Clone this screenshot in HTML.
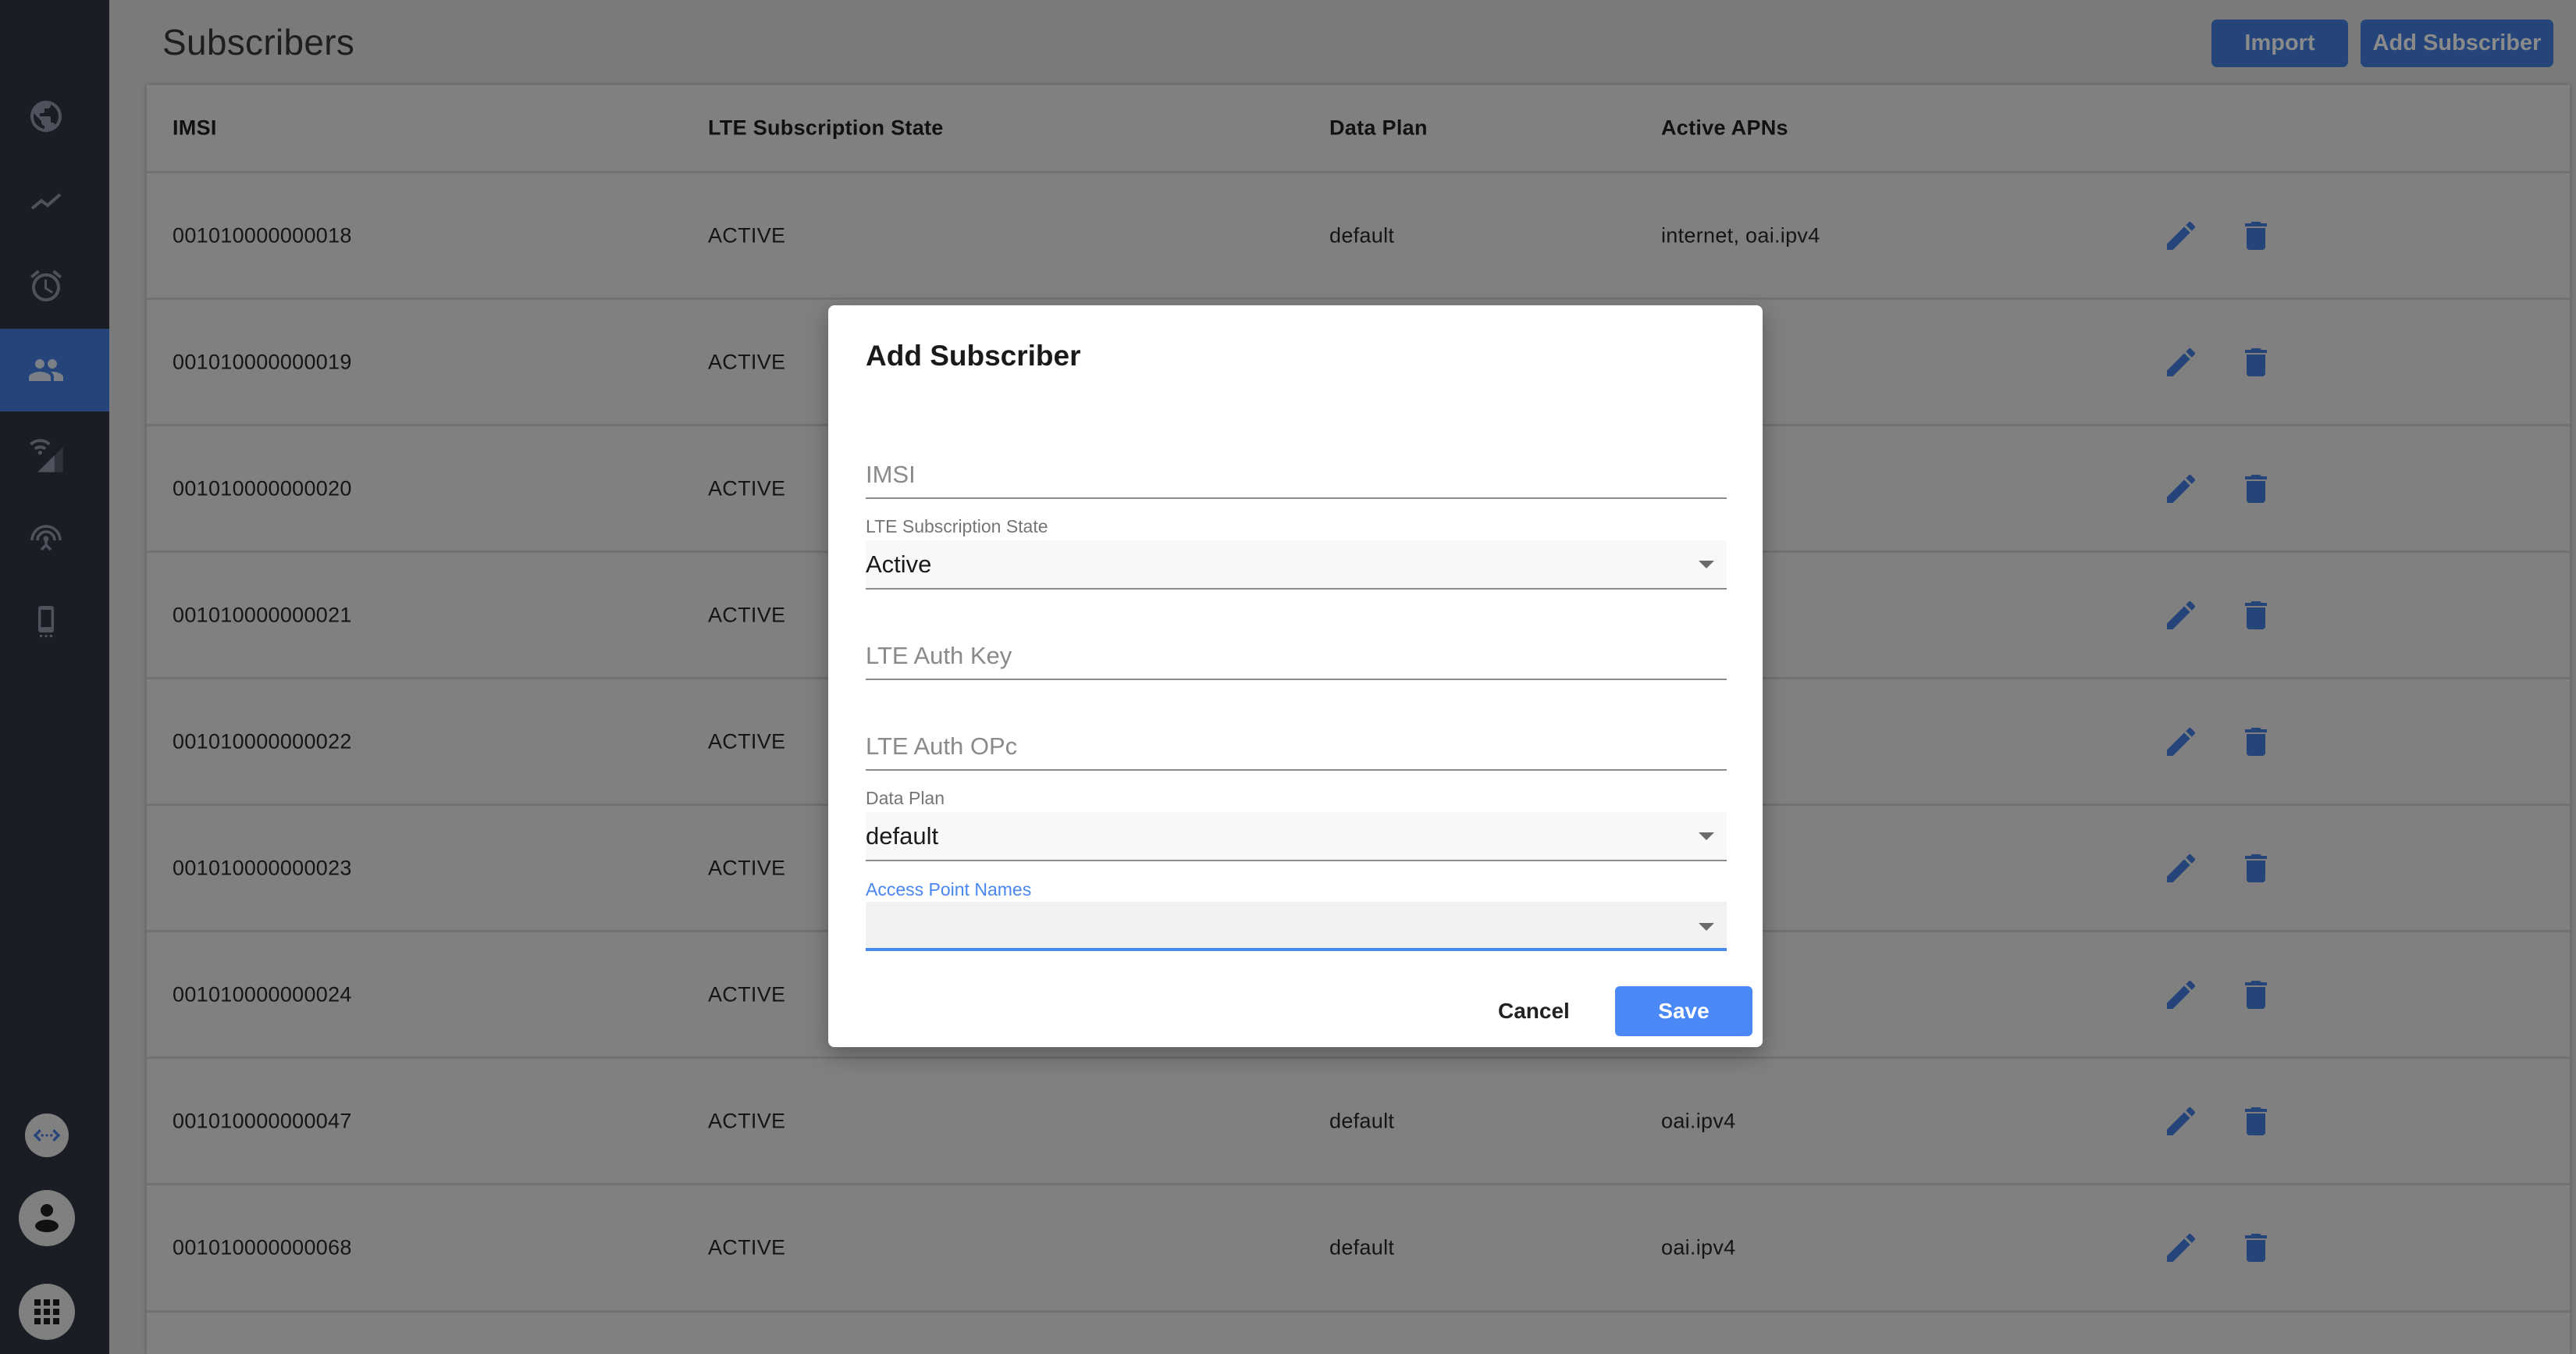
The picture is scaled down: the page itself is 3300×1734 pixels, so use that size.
<!DOCTYPE html>
<html><head><meta charset="utf-8"><style>
*{margin:0;padding:0;box-sizing:border-box}
body{width:3300px;height:1734px;overflow:hidden;background:#7a7a7a;font-family:"Liberation Sans",sans-serif;position:relative}
.abs{position:absolute}
#side{left:0;top:0;width:140px;height:1734px;background:#1a1d24}
.ic{position:absolute;left:35px;width:48px;height:48px}
.card{left:188px;top:109px;width:3104px;height:1625px;background:#808080;box-shadow:0 0 6px rgba(0,0,0,.25)}
.line{position:absolute;left:188px;width:3104px;height:3px;background:#727272}
.t{position:absolute;font-size:27px;color:#151515;transform:translateY(-50%);white-space:nowrap;letter-spacing:0.3px}
.h{font-weight:600;font-size:27px;color:#111}
.btn{position:absolute;background:#24447a;border-radius:7px;color:#8a8a8a;font-size:29px;font-weight:600;text-align:center}
#modal{left:1061px;top:391px;width:1197px;height:950px;background:#fff;border-radius:8px;box-shadow:0 10px 30px rgba(0,0,0,.3)}
.m{position:absolute;white-space:nowrap;font-family:"Liberation Sans",sans-serif}
.ul{position:absolute;left:48px;width:1103px;height:2px;background:#8c8c8c}
.sel{position:absolute;left:48px;width:1103px;background:#f8f8f8}
.arr{position:absolute;left:1115px;width:0;height:0;border-left:10px solid transparent;border-right:10px solid transparent;border-top:10px solid #6b6b6b}
</style></head><body>
<div id="side" class="abs">
 <div class="abs" style="left:0;top:421px;width:140px;height:106px;background:#24447a"></div>
 <svg class="ic" style="top:125px" viewBox="0 0 24 24"><path fill="#4d525c" d="M12 2C6.480 2 2 6.48 2 12s4.48 10 10 10 10-4.48 10-10S17.52 2 12 2zm-1 17.93c-3.95-.49-7-3.850-7-7.930 0-.62.08-1.21.21-1.79L9 15v1c0 1.1.9 2 2 2v1.93zm6.9-2.54c-.26-.81-1-1.39-1.9-1.39h-1v-3c0-.55-.45-1-1-1H8v-2h2c.55 0 1-.45 1-1V7h2c1.1 0 2-.9 2-2v-.41c2.93 1.19 5 4.06 5 7.41 0 2.08-.8 3.97-2.1 5.39z"/></svg>
 <svg class="ic" style="top:233px" viewBox="0 0 24 24"><path fill="none" stroke="#4d525c" stroke-width="2" d="M3 17l6-5 4 3 8-7"/></svg>
 <svg class="ic" style="top:342px" viewBox="0 0 24 24"><path fill="#4d525c" d="M22 5.72l-4.6-3.86-1.29 1.53 4.6 3.86L22 5.72zM7.88 3.39L6.6 1.86 2 5.71l1.29 1.53 4.59-3.85zM12.5 8H11v6l4.75 2.85.75-1.23-4-2.37V8zM12 4c-4.97 0-9 4.03-9 9s4.02 9 9 9c4.97 0 9-4.03 9-9s-4.03-9-9-9zm0 16c-3.87 0-7-3.13-7-7s3.13-7 7-7 7 3.13 7 7-3.13 7-7 7z"/></svg>
 <svg class="ic" style="top:450px" viewBox="0 0 24 24"><path fill="#7a7f88" d="M16 11c1.66 0 2.99-1.34 2.99-3S17.66 5 16 5c-1.66 0-3 1.34-3 3s1.34 3 3 3zm-8 0c1.66 0 2.99-1.34 2.99-3S9.66 5 8 5C6.34 5 5 6.34 5 8s1.34 3 3 3zm0 2c-2.33 0-7 1.17-7 3.5V19h14v-2.5c0-2.33-4.67-3.5-7-3.5zm8 0c-.29 0-.62.02-.97.05 1.16.84 1.97 1.97 1.97 3.45V19h6v-2.5c0-2.33-4.67-3.5-7-3.5z"/></svg>
 <svg class="ic" style="top:557px;left:33px;width:52px;height:52px" viewBox="0 0 24 24"><path fill="#2e323b" d="M22 7v15H8z"/><path fill="#4d525c" d="M17 12v10H7z"/><path fill="none" stroke="#4d525c" stroke-width="1.8" d="M3 5.5a8 8 0 0 1 11 0M5.5 8.3a4.5 4.5 0 0 1 6 0"/><circle cx="8.5" cy="10.5" r="1.2" fill="#4d525c"/></svg>
 <svg class="ic" style="top:664px" viewBox="0 0 24 24"><path fill="none" stroke="#4d525c" stroke-width="1.8" d="M3 14a9 9 0 0 1 18 0M6.5 14a5.5 5.5 0 0 1 11 0M9 20l3-3 3 3M12 13v4"/><circle cx="12" cy="13" r="1.8" fill="#4d525c"/></svg>
 <svg class="ic" style="top:772px" viewBox="0 0 24 24"><rect x="7" y="2" width="10" height="17" rx="1.5" fill="#4d525c"/><rect x="8.7" y="4.5" width="6.6" height="11" fill="#1a1d24"/><rect x="8" y="20.5" width="1.6" height="1.6" fill="#4d525c"/><rect x="11.2" y="20.5" width="1.6" height="1.6" fill="#4d525c"/><rect x="14.4" y="20.5" width="1.6" height="1.6" fill="#4d525c"/></svg>
 <div class="abs" style="left:32px;top:1426px;width:56px;height:56px;border-radius:50%;background:#808080"></div>
 <svg class="abs" style="left:40px;top:1434px;width:40px;height:40px" viewBox="0 0 24 24"><path fill="none" stroke="#24447a" stroke-width="2" d="M7 8l-4 4 4 4M17 8l4 4-4 4"/><circle cx="8.5" cy="12" r="1" fill="#24447a"/><circle cx="12" cy="12" r="1" fill="#24447a"/><circle cx="15.5" cy="12" r="1" fill="#24447a"/></svg>
 <div class="abs" style="left:24px;top:1524px;width:72px;height:72px;border-radius:50%;background:#808080"></div>
 <div class="abs" style="left:52px;top:1542px;width:16px;height:16px;border-radius:50%;background:#111"></div>
 <div class="abs" style="left:45px;top:1562px;width:30px;height:16px;border-radius:50%;background:#111"></div>
 <div class="abs" style="left:24px;top:1644px;width:72px;height:72px;border-radius:50%;background:#808080"></div>
 <svg class="abs" style="left:44px;top:1664px;width:32px;height:32px" viewBox="0 0 32 32" fill="#111"><rect x="0" y="0" width="8" height="8"/><rect x="12" y="0" width="8" height="8"/><rect x="24" y="0" width="8" height="8"/><rect x="0" y="12" width="8" height="8"/><rect x="12" y="12" width="8" height="8"/><rect x="24" y="12" width="8" height="8"/><rect x="0" y="24" width="8" height="8"/><rect x="12" y="24" width="8" height="8"/><rect x="24" y="24" width="8" height="8"/></svg>
</div>

<div class="t" style="left:208px;top:54px;font-size:46px;color:#1e1e1e">Subscribers</div>
<div class="btn" style="left:2833px;top:25px;width:175px;height:61px;line-height:61px">Import</div>
<div class="btn" style="left:3024px;top:25px;width:247px;height:61px;line-height:61px">Add Subscriber</div>

<div class="abs card"></div>
<div class="t h" style="left:221px;top:164px">IMSI</div>
<div class="t h" style="left:907px;top:164px">LTE Subscription State</div>
<div class="t h" style="left:1703px;top:164px">Data Plan</div>
<div class="t h" style="left:2128px;top:164px">Active APNs</div>
<div id="rows"></div>
<script>
var ids=["018","019","020","021","022","023","024","047","068"];
var h="";
for(var i=0;i<9;i++){
 var y=302+i*162;
 h+='<div class="line" style="top:'+(219+i*162)+'px"></div>';
 h+='<div class="t" style="left:221px;top:'+y+'px">001010000000'+ids[i]+'</div>';
 h+='<div class="t" style="left:907px;top:'+y+'px">ACTIVE</div>';
 h+='<div class="t" style="left:1703px;top:'+y+'px">default</div>';
 h+='<div class="t" style="left:2128px;top:'+y+'px">'+(i==0?'internet, oai.ipv4':'oai.ipv4')+'</div>';
 h+='<svg class="abs" style="left:2770px;top:'+(y-24)+'px;width:48px;height:48px" viewBox="0 0 24 24"><path fill="#24447a" d="M3 17.25V21h3.75L17.81 9.94l-3.75-3.75L3 17.25zM20.71 7.04a1 1 0 0 0 0-1.41l-2.34-2.34a1 1 0 0 0-1.41 0l-1.83 1.83 3.75 3.75 1.83-1.830z"/></svg>';
 h+='<svg class="abs" style="left:2866px;top:'+(y-24)+'px;width:48px;height:48px" viewBox="0 0 24 24"><path fill="#24447a" d="M6 19c0 1.1.9 2 2 2h8c1.1 0 2-.9 2-2V7H6v12zM19 4h-3.5l-1-1h-5l-1 1H5v2h14V4z"/></svg>';
}
h+='<div class="line" style="top:1678px"></div>';
document.getElementById("rows").outerHTML=h;
</script>

<div id="modal" class="abs">
 <div class="m" style="left:48px;top:44px;font-size:37px;font-weight:bold;color:#1a1a1a">Add Subscriber</div>
 <div class="m" style="left:48px;top:199px;font-size:31px;color:#8a8a8a">IMSI</div>
 <div class="ul" style="top:246px"></div>
 <div class="m" style="left:48px;top:270px;font-size:23px;color:#757575">LTE Subscription State</div>
 <div class="sel" style="top:301px;height:61px"></div>
 <div class="m" style="left:48px;top:314px;font-size:31px;color:#1a1a1a">Active</div>
 <div class="arr" style="top:327px"></div>
 <div class="ul" style="top:362px"></div>
 <div class="m" style="left:48px;top:431px;font-size:31px;color:#8a8a8a">LTE Auth Key</div>
 <div class="ul" style="top:478px"></div>
 <div class="m" style="left:48px;top:547px;font-size:31px;color:#8a8a8a">LTE Auth OPc</div>
 <div class="ul" style="top:594px"></div>
 <div class="m" style="left:48px;top:618px;font-size:23px;color:#757575">Data Plan</div>
 <div class="sel" style="top:649px;height:61px"></div>
 <div class="m" style="left:48px;top:662px;font-size:31px;color:#1a1a1a">default</div>
 <div class="arr" style="top:675px"></div>
 <div class="ul" style="top:710px"></div>
 <div class="m" style="left:48px;top:735px;font-size:23px;color:#4a86f0">Access Point Names</div>
 <div class="sel" style="top:764px;height:61px;background:#f2f2f2"></div>
 <div class="arr" style="top:791px"></div>
 <div class="ul" style="top:823px;height:4px;background:#4a86f0"></div>
 <div class="m" style="left:858px;top:888px;font-size:28px;font-weight:600;color:#222">Cancel</div>
 <div class="m" style="left:1008px;top:872px;width:176px;height:64px;background:#4a88f5;border-radius:6px;color:#fff;font-size:28px;font-weight:600;text-align:center;line-height:64px">Save</div>
</div>
</body></html>
